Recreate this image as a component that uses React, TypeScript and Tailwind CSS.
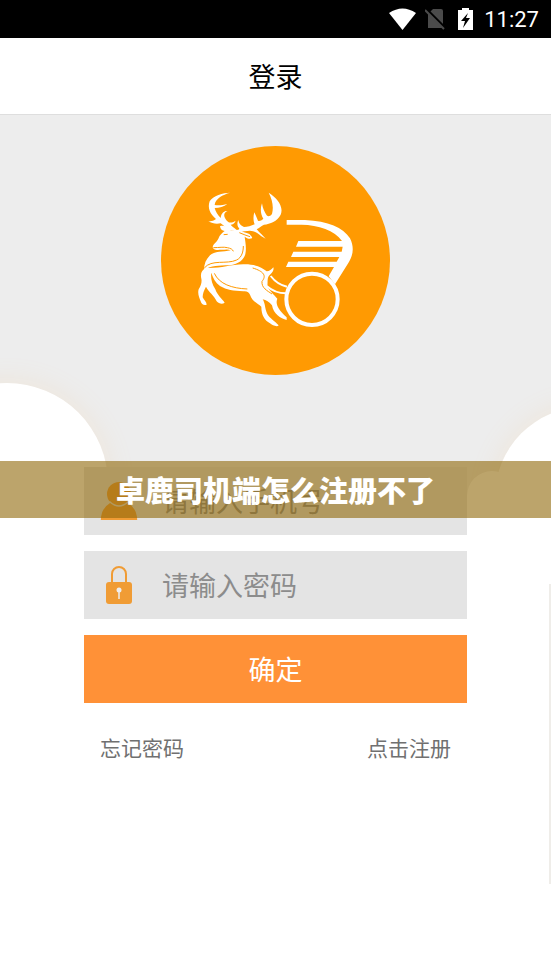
import React from "react";

function StatusBar() {
  return (
    <div className="flex h-[38px] items-center justify-end bg-black pr-3 font-['Roboto',sans-serif] text-[22px] text-white">
      <svg className="mr-[9px] h-[22px] w-[27px]" viewBox="0 0 27 22" aria-hidden="true">
        <path d="M0 5Q13.500 -4 27 5L13.500 22Z" fill="#fff" />
      </svg>
      <svg className="mr-3 h-[22px] w-[21px]" viewBox="0 0 21 22" aria-hidden="true">
        <path d="M8 1H16Q18 1 18 3V20H3V6Z" fill="#4b4b4b" />
        <path d="M2 2L19 19" stroke="#000" strokeWidth="3" />
        <path d="M0 2L19 21" stroke="#4b4b4b" strokeWidth="2" />
      </svg>
      <svg className="mr-[11px] h-[22px] w-[15px]" viewBox="0 0 15 22" aria-hidden="true">
        <path d="M4 0H11V2H15V22H0V2H4Z" fill="#fff" />
        <path d="M10 5L3 13H7L5 20L12 10H8Z" fill="#000" />
      </svg>
      <span>11:27</span>
    </div>
  );
}

function Logo() {
  return (
    <svg className="h-[229px] w-[229px]" viewBox="161 146 229 229" role="img" aria-label="卓鹿">
      <circle cx="275.5" cy="260.500" r="114.500" fill="#ff9a02" />
      <g transform="translate(190 180) scale(.33333)" fill="#fff">
        <path d="M120 38C100 38 68 48 59 64C52 84 60 102 78 117C70 123 62 125 55 123C66 132 82 132 92 130C100 136 108 142 112 150L140 150C132 142 124 138 122 134C128 134 134 130 137 122C130 127 122 129 116 127C106 120 100 108 104 100C106 96 110 94 113 93C102 92 94 98 92 114C84 106 76 94 74 84C88 84 102 80 112 72C98 76 84 77 74 75C76 56 98 44 120 38Z" />
        <path d="M236 38C246 56 252 80 246 102C240 110 234 110 230 106C224 96 218 86 216 70C210 86 212 104 220 116C214 122 208 124 204 122C200 112 196 104 193 97C189 110 190 124 194 133C184 138 172 141 162 141C152 136 146 130 145 120C140 130 142 140 148 146L140 156L180 152C192 153 202 157 213 168L227 176C217 165 202 151 200 148C208 144 214 138 222 134C240 132 262 124 272 104C282 80 262 54 236 38Z" />
        <path d="M90 139C100 134 113 142 122 151L148 149C156 155 168 158 178 162C184 168 188 172 186 175C178 178 170 175 164 170C166 186 170 204 166 222C162 238 148 252 118 256C85 257 65 256 42 270C42 252 48 238 60 226C72 214 100 216 122 211C112 206 100 211 88 209C80 212 70 210 68 202C69 191 80 188 85 176C89 164 98 158 104 153C97 153 91 148 90 139Z" />
        <path d="M101 164L113 163M70 203C88 203 100 200 112 203C122 205 128 208 130 214M148 158C160 163 170 167 180 170" fill="none" stroke="#ff9a02" strokeWidth="3" />
        <path d="M43 264C64 237 110 254 140 240C156 232 160 214 160 198" fill="none" stroke="#ff9a02" strokeWidth="3" />
      </g>
      <g transform="translate(190 240) scale(.33333)" fill="#fff">
        <path d="M48 84C90 86 120 74 160 73C195 72 215 82 230 94C238 94 245 88 250 82C252 88 250 96 240 104C230 112 234 125 232 138C236 150 250 162 262 176C256 190 262 208 290 232L290 240C272 236 250 222 246 196C238 186 228 180 218 178C226 190 224 204 232 222C240 236 256 244 266 256C262 262 246 256 240 250C224 240 214 226 214 200C204 190 186 184 180 164C178 158 170 152 160 154C130 152 110 150 90 138C76 128 68 112 64 98C62 112 64 130 76 148C82 166 96 176 104 188C96 194 86 190 80 184C72 166 56 156 48 140C42 152 38 160 38 172C42 180 50 186 50 194C42 198 34 192 32 184C28 174 22 160 26 148C34 136 36 124 34 116C30 100 36 90 48 84Z" />
        <path d="M73 100C88 132 125 145 172 147M188 84C222 94 230 108 216 124C214 144 232 152 246 162" fill="none" stroke="#ff9a02" strokeWidth="3" />
        <path d="M242 108C255 125 272 136 291 140M230 138C248 154 268 160 288 160" fill="none" stroke="#fff" strokeWidth="6" />
      </g>
      <g transform="translate(270 205) scale(.33333)" fill="#fff">
        <path d="M50 45H105C175 48 219 68 240 100C253 126 250 150 235 174L195 238L176 214L192 186H48L55 170H200L208 156H63L70 140H215L218 125H78L85 108H216C194 76 145 60 95 59H50Z" />
        <circle cx="126" cy="283" r="77" fill="none" stroke="#fff" strokeWidth="12" />
      </g>
    </svg>
  );
}

function UserIcon() {
  return (
    <svg className="h-[38px] w-[38px]" viewBox="0 0 38 38" fill="#f09c35" aria-hidden="true">
      <circle cx="19" cy="12" r="12" />
      <path
        d="M0 39C0 29 5 23 10 20Q19 28 28 20C33 23 38 29 38 39Z"
        stroke="#e4e4e4"
        strokeWidth="1.500"
      />
    </svg>
  );
}

function LockIcon() {
  return (
    <svg className="h-[38px] w-[38px]" viewBox="0 0 38 38" aria-hidden="true">
      <path d="M12 17V8A7 7 0 0 1 26 8V17" fill="none" stroke="#f09c35" strokeWidth="2" />
      <rect x="6" y="16" width="26" height="22" rx="3" fill="#f09c35" />
      <circle cx="19" cy="24" r="2.500" fill="#eee" />
      <path d="M19 25V33" stroke="#eee" strokeWidth="1.500" />
    </svg>
  );
}

type FieldProps = {
  id: string;
  type: string;
  label: string;
  icon: React.ReactNode;
};

function Field({ id, type, label, icon }: FieldProps) {
  return (
    <div className="flex h-[68px] items-center bg-[#e4e4e4] px-4">
      <label htmlFor={id} aria-label={label}>
        {icon}
      </label>
      <input
        id={id}
        type={type}
        placeholder={label}
        className="ml-6 min-w-0 flex-1 bg-transparent text-[27px] text-[#555] outline-none placeholder:text-[#8c8c8c]"
      />
    </div>
  );
}

function Backdrop() {
  return (
    <div className="absolute inset-x-0 top-0 h-[402px] overflow-hidden bg-[#ededed]" aria-hidden="true">
      <div className="absolute -left-[94px] top-[268px] h-[300px] w-[202px] rounded-t-full bg-white shadow-[0_0_28px_rgba(255,190,110,0.16)]" />
      <div className="absolute -right-[124px] top-[292px] h-[300px] w-[180px] rounded-t-full bg-white shadow-[0_0_28px_rgba(255,190,110,0.16)]" />
      <div className="absolute right-[34px] top-[356px] h-[100px] w-[50px] rounded-t-full bg-white" />
    </div>
  );
}

export default function App() {
  return (
    <div className="relative min-h-screen bg-white font-['Noto_Sans_CJK_SC',sans-serif]">
      <StatusBar />
      <header className="flex h-[77px] items-center justify-center border-b border-[#dedede] bg-white">
        <h1 className="text-[27px] font-normal text-black">登录</h1>
      </header>
      <main className="relative">
        <Backdrop />
        <div className="relative flex flex-col px-[84px] pt-[31px]">
          <div className="flex justify-center">
            <Logo />
          </div>
          <form className="mt-[92px] flex flex-col gap-4" onSubmit={(e) => e.preventDefault()}>
            <Field id="phone" type="tel" label="请输入手机号" icon={<UserIcon />} />
            <Field id="password" type="password" label="请输入密码" icon={<LockIcon />} />
            <button type="submit" className="h-[68px] bg-[#ff9137] text-[27px] text-white">
              确定
            </button>
          </form>
          <nav className="mt-7 flex justify-between px-4 text-[21px] leading-8 text-[#707070]">
            <a href="#forgot">忘记密码</a>
            <a href="#register">点击注册</a>
          </nav>
        </div>
        <div className="absolute right-0 top-[469px] h-[300px] w-[2px] bg-[#efede9]" />
        <div className="absolute inset-x-0 top-[346px] flex h-[57px] items-center justify-center bg-[rgba(143,103,8,0.6)]">
          <h2 className="text-[29px] font-black text-white">卓鹿司机端怎么注册不了</h2>
        </div>
      </main>
    </div>
  );
}
